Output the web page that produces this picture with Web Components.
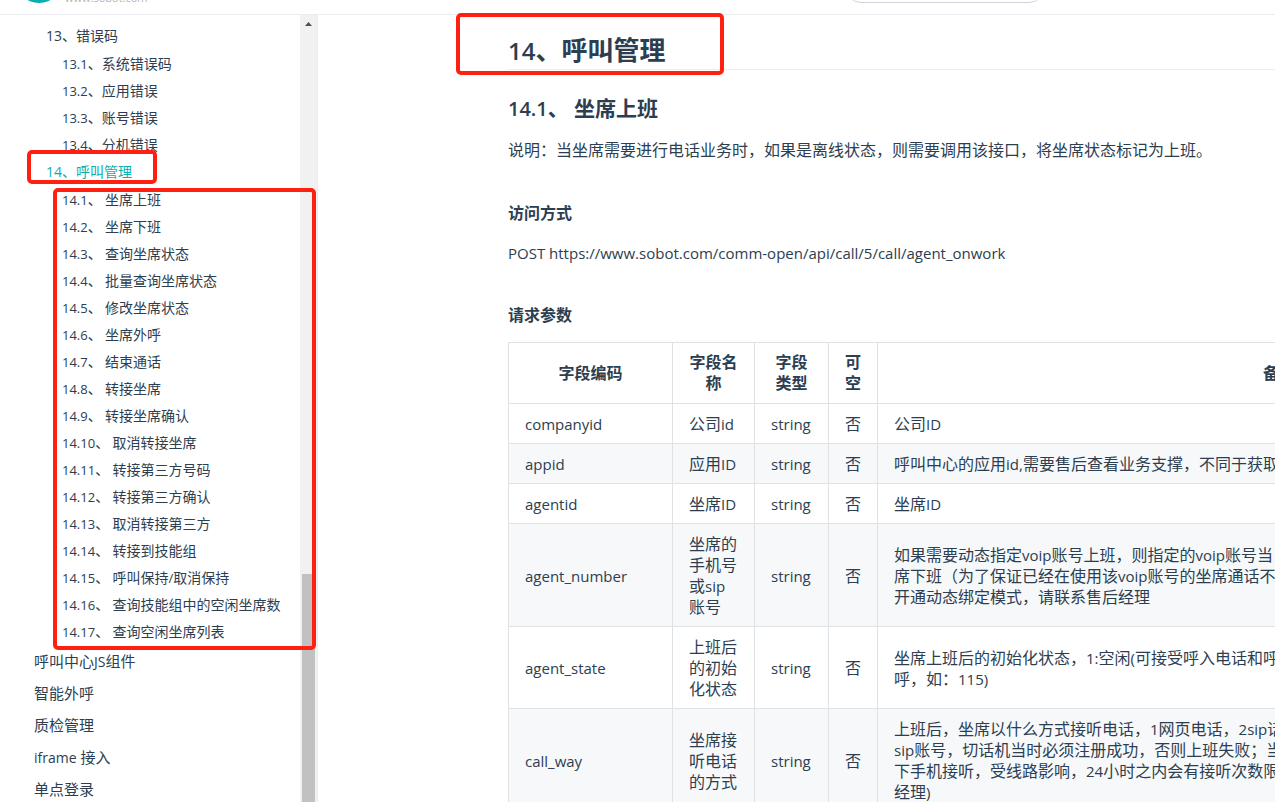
<!DOCTYPE html>
<html lang="zh-CN">
<head>
<meta charset="utf-8">
<title>呼叫管理</title>
<style>
body { margin: 0; font-family: "Open Sans", "Noto Sans CJK SC", sans-serif; color: #2c3e50; background: #fff; }
</style>
</head>
<body>
<doc-page></doc-page>
<script>
// Latin letters and digits are set one step smaller than the Chinese text around them.
const mix = s => s.split('\n').map(l => l.replace(/[A-Za-z0-9_.:,\/()-]+(?: (?=[A-Za-z]))?|(?<=、) /g, m => `<span class="l">${m}</span>`)).join('<br>');
const shadow = (el, html) => { el.attachShadow({ mode: 'open' }).innerHTML = html; };

class DocHeader extends HTMLElement {
  constructor() {
    super();
    shadow(this, `<style>
      :host { display: flex; align-items: flex-end; height: 14px; overflow: hidden; border-bottom: 1px solid #eaecef; background: #fff; }
      .brand { flex: 1; display: flex; align-items: flex-end; gap: 2px; padding-left: 15px; margin-bottom: 11px; }
      svg { display: block; }
      small { font-size: 11px; line-height: 10px; color: #b4b4b4; }
      input { box-sizing: border-box; width: 200px; height: 32px; margin: 0 230px 11px 0; border: 1px solid #cfd4db; border-radius: 16px; outline: 0; background: #fff; }
    </style>
    <div class="brand">
      <svg width="48" height="48" viewBox="0 0 48 48" aria-hidden="true"><circle cx="24" cy="24" r="24" fill="#09aeb0"/></svg>
      <small>www.sobot.com</small>
    </div>
    <input type="search" aria-label="搜索">`);
  }
}
customElements.define('doc-header', DocHeader);

class NavLink extends HTMLElement {
  constructor() {
    super();
    shadow(this, `<style>
      :host { display: block; white-space: pre; }
      a { display: block; color: inherit; text-decoration: none; font-size: 14px; line-height: 27px; padding-left: 62px; }
      :host([level="1"]) a { line-height: 28px; padding-left: 46px; }
      :host([level="0"]) a { font-size: 15px; line-height: 32px; padding-left: 34px; }
      :host([active]) a { color: #09aeb0; }
      .l { font-size: 13px; line-height: 1; }
      :host([level="0"]) .l, :host([level="1"]) .l { font-size: 14px; }
    </style><a href="#"></a>`);
  }
  connectedCallback() { this.shadowRoot.querySelector('a').innerHTML = mix(this.getAttribute('label')); }
}
customElements.define('nav-link', NavLink);

class SideNav extends HTMLElement {
  constructor() {
    super();
    const items = [
      [1, '13、错误码'], [2, '13.1、系统错误码'], [2, '13.2、应用错误'], [2, '13.3、账号错误'], [2, '13.4、分机错误'],
      [1, '14、呼叫管理'],
      ...['坐席上班', '坐席下班', '查询坐席状态', '批量查询坐席状态', '修改坐席状态', '坐席外呼', '结束通话', '转接坐席', '转接坐席确认',
        '取消转接坐席', '转接第三方号码', '转接第三方确认', '取消转接第三方', '转接到技能组', '呼叫保持/取消保持', '查询技能组中的空闲坐席数', '查询空闲坐席列表']
        .map((t, i) => [2, `14.${i + 1}、 ${t}`]),
      [0, '呼叫中心JS组件'], [0, '智能外呼'], [0, '质检管理'], [0, 'iframe 接入'], [0, '单点登录']
    ];
    shadow(this, `<style>
      :host { display: flex; flex: 0 0 317px; border-right: 1px solid #eaecef; overflow: hidden; }
      nav { flex: 1; padding-top: 7px; }
      .bar { box-sizing: border-box; width: 17px; background: #f1f1f1; display: flex; flex-direction: column; padding: 0 2px; }
      svg { display: block; flex: none; }
      .gap { flex: 543; }
      .thumb { flex: 228; background: #c1c1c1; }
    </style>
    <nav>${items.map(([l, t]) => `<nav-link level="${l}" label="${t}"${t === '14、呼叫管理' ? ' active' : ''}></nav-link>`).join('')}</nav>
    <div class="bar"><svg width="13" height="17" viewBox="0 0 13 17"><path d="M3 11L6.500 7L10 11Z" fill="#505050"/></svg><div class="gap"></div><div class="thumb"></div></div>`);
  }
}
customElements.define('side-nav', SideNav);

class ParamTable extends HTMLElement {
  constructor() {
    super();
    const rows = [
      ['companyid', '公司id', '公司ID'],
      ['appid', '应用ID', '呼叫中心的应用id,需要售后查看业务支撑，不同于获取'],
      ['agentid', '坐席ID', '坐席ID'],
      ['agent_number', '坐席的手机号或sip账号', '如果需要动态指定voip账号上班，则指定的voip账号当\n席下班（为了保证已经在使用该voip账号的坐席通话不\n开通动态绑定模式，请联系售后经理'],
      ['agent_state', '上班后的初始化状态', '坐席上班后的初始化状态，1:空闲(可接受呼入电话和呼\n呼，如：115)'],
      ['call_way', '坐席接听电话的方式', '上班后，坐席以什么方式接听电话，1网页电话，2sip话\nsip账号，切话机当时必须注册成功，否则上班失败；当\n下手机接听，受线路影响，24小时之内会有接听次数限\n经理)']
    ];
    shadow(this, `<style>
      :host { display: block; }
      table { border-collapse: collapse; table-layout: fixed; width: 1173px; font-size: 16px; line-height: 21px; }
      .c1 { width: 164px; } .c2 { width: 82px; } .c3 { width: 74px; } .c4 { width: 49px; }
      th, td { border: 1px solid #dfe2e5; padding: 10px 16px 8px; text-align: left; }
      th { text-align: center; font-weight: 600; padding: 9px 16px; }
      td:nth-child(2), td:nth-child(3), td:nth-child(4) { padding-right: 15px; }
      tbody tr:nth-child(even) { background: #f6f8fa; }
      .l { font-size: 15px; line-height: 1; }
    </style>
    <table>
      <colgroup><col class="c1"><col class="c2"><col class="c3"><col class="c4"><col></colgroup>
      <thead><tr><th>字段编码</th><th>字段名称</th><th>字段类型</th><th>可空</th><th>备注</th></tr></thead>
      <tbody>${rows.map(([a, b, c]) => `<tr><td>${mix(a)}</td><td>${mix(b)}</td><td>${mix('string')}</td><td>否</td><td>${mix(c)}</td></tr>`).join('')}</tbody>
    </table>`);
  }
}
customElements.define('param-table', ParamTable);

class DocArticle extends HTMLElement {
  constructor() {
    super();
    shadow(this, `<style>
      :host { display: block; flex: 1; min-width: 0; box-sizing: border-box; padding-left: 190px; overflow: hidden; }
      h2, h3, h4, p { margin: 0; white-space: nowrap; }
      h2 { font-size: 26px; line-height: 36px; padding: 17px 0 1px; border-bottom: 1px solid #eaecef; font-weight: 700; }
      h3 { font-size: 21px; line-height: 32px; margin-top: 22px; font-weight: 700; }
      h4 { font-size: 16px; line-height: 24px; margin-top: 34px; font-weight: 700; }
      p { font-size: 16px; line-height: 32px; margin-top: 12px; }
      h3 + p { margin-top: 10px; }
      h3 + p + h4 { margin-top: 35px; }
      param-table { margin-top: 15px; }
      .l { font-size: 15px; line-height: 1; }
      h2 .l { font-size: 24px; font-weight: 600; }
      h3 .l { font-size: 20px; font-weight: 600; }
    </style>
    <h2>${mix('14、呼叫管理')}</h2>
    <h3>${mix('14.1、 坐席上班')}</h3>
    <p>说明：当坐席需要进行电话业务时，如果是离线状态，则需要调用该接口，将坐席状态标记为上班。</p>
    <h4>访问方式</h4>
    <p>${mix('POST https://www.sobot.com/comm-open/api/call/5/call/agent_onwork')}</p>
    <h4>请求参数</h4>
    <param-table></param-table>`);
  }
}
customElements.define('doc-article', DocArticle);

class DocPage extends HTMLElement {
  constructor() {
    super();
    shadow(this, `<style>
      :host { display: flex; flex-direction: column; position: relative; height: 100vh; overflow: hidden; }
      doc-header { flex: none; }
      main { flex: 1; min-height: 0; display: flex; }
      .mark { position: absolute; box-sizing: border-box; border: 4px solid #ff2012; border-radius: 5px; pointer-events: none; }
      .title { left: 456px; top: 13px; width: 268px; height: 62px; }
      .chapter { left: 27px; top: 150px; width: 130px; height: 34px; }
      .sections { left: 53px; top: 188px; width: 263px; height: 462px; }
    </style>
    <doc-header></doc-header>
    <main><side-nav></side-nav><doc-article></doc-article></main>
    <div class="mark title"></div><div class="mark chapter"></div><div class="mark sections"></div>`);
  }
}
customElements.define('doc-page', DocPage);
</script>
</body>
</html>
